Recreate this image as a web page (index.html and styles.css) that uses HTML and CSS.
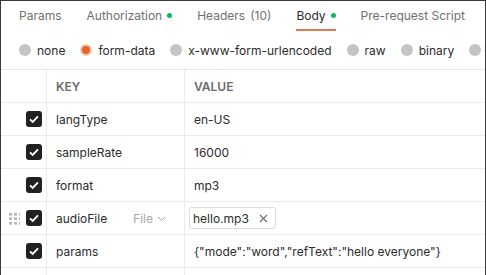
FILE: index.html
```html
<!DOCTYPE html>
<html>
<head>
<meta name="viewport" content="width=device-width, initial-scale=1">
<link rel="stylesheet" href="styles.css">
</head>
<body>
<div class="frame">
  <div class="tabs">
    <span class="tab">Params</span>
    <span class="tab">Authorization <i class="dot"></i></span>
    <span class="tab">Headers <span class="count">(10)</span></span>
    <span class="tab active">Body <i class="dot"></i></span>
    <span class="tab">Pre-request Script</span>
  </div>

  <div class="modes">
    <label class="mode"><i class="radio"></i>none</label>
    <label class="mode"><i class="radio on"></i>form-data</label>
    <label class="mode"><i class="radio"></i>x-www-form-urlencoded</label>
    <label class="mode"><i class="radio"></i>raw</label>
    <label class="mode"><i class="radio"></i>binary</label>
    <label class="mode"><i class="radio"></i></label>
  </div>

  <div class="table">
    <div class="row head">
      <div class="cell check"></div>
      <div class="cell key">KEY</div>
      <div class="cell value">VALUE</div>
    </div>
    <div class="row">
      <div class="cell check"><i class="box"></i></div>
      <div class="cell key">langType</div>
      <div class="cell value">en-US</div>
    </div>
    <div class="row">
      <div class="cell check"><i class="box"></i></div>
      <div class="cell key">sampleRate</div>
      <div class="cell value">16000</div>
    </div>
    <div class="row">
      <div class="cell check"><i class="box"></i></div>
      <div class="cell key">format</div>
      <div class="cell value">mp3</div>
    </div>
    <div class="row">
      <div class="cell check"><i class="grip"></i><i class="box"></i></div>
      <div class="cell key">audioFile <span class="type">File
        <svg width="9" height="6" viewBox="0 0 9 6"><path d="M1 1l3.5 3.5L8 1" fill="none" stroke="#a6a6a6" stroke-width="1"/></svg></span></div>
      <div class="cell value"><span class="chip">hello.mp3
        <svg width="9" height="9" viewBox="0 0 9 9"><path d="M1 1l7 7M8 1L1 8" stroke="#6b6b6b" stroke-width="1.1"/></svg></span></div>
    </div>
    <div class="row">
      <div class="cell check"><i class="box"></i></div>
      <div class="cell key">params</div>
      <div class="cell value">{"mode":"word","refText":"hello everyone"}</div>
    </div>
    <div class="row">
      <div class="cell check"></div>
      <div class="cell key"></div>
      <div class="cell value"></div>
    </div>
  </div>
</div>
</body>
</html>
```
FILE: styles.css
```css
* {
  box-sizing: border-box;
}

body {
  margin: 0;
  font-family: Inter, "Noto Sans", sans-serif;
  font-size: 12px;
  color: #2b2b2b;
  background: #fff;
  overflow: hidden;
}

.frame {
  height: 275px;
  border-top: 1px solid #3a3a3a;
  border-left: 1px solid #3a3a3a;
  border-right: 1px solid #3a3a3a;
  overflow: hidden;
}

/* Tabs */
.tabs {
  display: flex;
  height: 30px;
  padding-left: 18px;
  gap: 25px;
}

.tab {
  display: flex;
  align-items: center;
  gap: 4px;
  height: 30px;
  color: #707070;
  white-space: nowrap;
  border-bottom: 2px solid transparent;
}

.tab.active {
  color: #2b2b2b;
  border-bottom-color: #e07b4f;
}

.count {
  margin-left: 1px;
}

.dot {
  width: 5px;
  height: 5px;
  border-radius: 50%;
  background: #0cbb52;
  margin-left: 1px;
}

/* Body mode radios */
.modes {
  display: flex;
  align-items: center;
  height: 39px;
  padding-left: 18px;
  gap: 15px;
  border-bottom: 1px solid #e6e6e6;
  white-space: nowrap;
}

.mode {
  display: flex;
  align-items: center;
  gap: 6px;
  color: #2b2b2b;
}

.radio {
  width: 12px;
  height: 12px;
  border-radius: 50%;
  background: #c4c4c4;
}

.radio.on {
  background: #e2672f;
  border: 2.5px solid #f0c3ad;
}

/* Key / value table */
.row {
  display: grid;
  grid-template-columns: 46px 138px 1fr;
  height: 33px;
  border-bottom: 1px solid #ebebeb;
}

.cell {
  display: flex;
  align-items: center;
  padding-left: 9px;
  border-right: 1px solid #ebebeb;
  white-space: nowrap;
}

.cell.value {
  border-right: none;
}

.row.head .cell {
  color: #6b6b6b;
  font-weight: 600;
}

.cell.check {
  position: relative;
  justify-content: flex-end;
  padding-right: 4px;
}

.box {
  width: 16px;
  height: 16px;
  border-radius: 3px;
  background: #212121 url("data:image/svg+xml,%3Csvg xmlns='http://www.w3.org/2000/svg' width='16' height='16'%3E%3Cpath d='M4 8.3l2.7 2.6L12 5.4' fill='none' stroke='white' stroke-width='1.8'/%3E%3C/svg%3E") center no-repeat;
}

.grip {
  position: absolute;
  left: 7px;
  top: 10px;
  width: 12px;
  height: 13px;
  background-image: radial-gradient(circle, #b5b5b5 1.6px, transparent 1.8px);
  background-size: 5px 4.5px;
}

.type {
  display: flex;
  align-items: center;
  gap: 4px;
  margin-left: auto;
  margin-right: 18px;
  color: #a6a6a6;
}

.cell.key .type svg {
  margin-top: 1px;
}

.chip {
  display: inline-flex;
  align-items: center;
  gap: 10px;
  margin-left: -5px;
  height: 22px;
  padding: 0 7px 0 3px;
  border: 1px solid #dcdcdc;
  border-radius: 3px;
}
```
